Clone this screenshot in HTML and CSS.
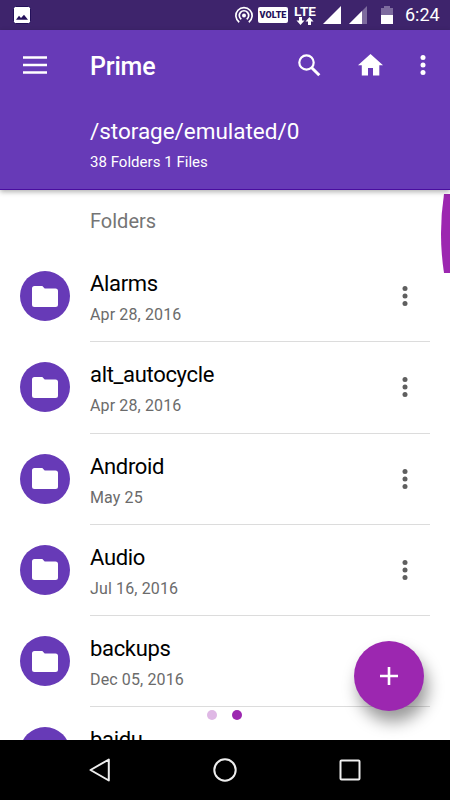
FILE: index.html
```
<!DOCTYPE html>
<html lang="en">
<head>
  <meta charset="utf-8">
  <title>Prime</title>
  <link rel="stylesheet" href="styles.css">
</head>
<body>
<!-- shared icons -->
<svg class="sprite">
  <symbol id="folder" viewBox="0 0 26 21">
    <path d="M2.500 0H10.300l2.400 2.400h10.800A2.500 2.500 0 0 1 26 4.900v13.600a2.500 2.500 0 0 1-2.500 2.500h-21A2.500 2.500 0 0 1 0 18.500v-16A2.500 2.500 0 0 1 2.500 0z"/>
  </symbol>
  <symbol id="dots" viewBox="0 0 6 20">
    <circle cx="3" cy="2.500" r="2.500"/><circle cx="3" cy="10" r="2.500"/><circle cx="3" cy="17.500" r="2.500"/>
  </symbol>
</svg>
<div class="phone">
  <div class="status">
    <svg class="picture" width="18" height="18" viewBox="0 0 18 18"><rect x=".5" y=".5" width="17" height="17" rx="2" fill="#fff" stroke="#24105a"/><path d="M3 13.800l3-4 2 2.300L11 8.800l4 5z" fill="#24105a"/></svg>
    <svg class="hotspot" width="18" height="18" viewBox="0 0 18 18" fill="none" stroke="#fff" stroke-width="1.700"><path d="M4.200 16.200a8.100 8.100 0 1 1 9.600 0"/><path d="M6.300 13.300a4.700 4.700 0 1 1 5.400 0"/><circle cx="9" cy="9.500" r="2" fill="#fff" stroke="none"/></svg>
    <span class="volte">VOLTE</span>
    <div class="lte">
      <span>LTE</span>
      <svg width="18" height="8" viewBox="0 0 18 8" fill="#fff"><path d="M3 0h3v3.500h2.500l-4 4.500-4-4.500H3zM12 8h3V4.500h2.500L13.500 0l-4 4.500H12z"/></svg>
    </div>
    <svg class="signal" width="18" height="18" viewBox="0 0 18 18"><path d="M0 18L18 0v18z" fill="#fff"/></svg>
    <svg class="signal2" width="18" height="18" viewBox="0 0 18 18"><path d="M0 18L18 0v18z" fill="#7d6b9e"/><path d="M0 18L13 5v13z" fill="#fff"/></svg>
    <svg class="battery" width="12" height="18" viewBox="0 0 12 18"><path d="M0 2h3V0h6v2h3v7H0z" fill="#7d6b9e"/><path d="M0 9h12v9H0z" fill="#fff"/></svg>
    <span class="clock">6:24</span>
  </div>

  <header>
    <div class="toolbar">
      <svg class="menu" width="24" height="18" viewBox="0 0 24 18"><path d="M0 1.500h24M0 9h24M0 16.500h24" stroke="#fff" stroke-width="2.500"/></svg>
      <h1>Prime</h1>
      <svg class="search" width="23" height="23" viewBox="0 0 23 23" fill="none" stroke="#fff"><circle cx="8.500" cy="8.500" r="7.200" stroke-width="2.200"/><path d="M13.500 13.500l7.800 7.800" stroke-width="3"/></svg>
      <svg class="home" width="25" height="22" viewBox="0 0 25 22" fill="#fff"><path d="M12.500 0L25 11.300h-3.700V21.500H15v-7.500h-5v7.500H3.800V11.300H0z"/></svg>
      <svg class="more" width="6" height="20"><use href="#dots"/></svg>
    </div>
    <div class="path">/storage/emulated/0</div>
    <div class="count">38 Folders 1 Files</div>
  </header>

  <main>
    <h2>Folders</h2>
    <div class="row">
      <div class="circle"><svg width="26" height="21"><use href="#folder"/></svg></div>
      <div class="info">
        <div><div class="name">Alarms</div><div class="date">Apr 28, 2016</div></div>
        <svg class="options" width="6" height="20"><use href="#dots"/></svg>
      </div>
    </div>
    <div class="row">
      <div class="circle"><svg width="26" height="21"><use href="#folder"/></svg></div>
      <div class="info">
        <div><div class="name">alt_autocycle</div><div class="date">Apr 28, 2016</div></div>
        <svg class="options" width="6" height="20"><use href="#dots"/></svg>
      </div>
    </div>
    <div class="row">
      <div class="circle"><svg width="26" height="21"><use href="#folder"/></svg></div>
      <div class="info">
        <div><div class="name">Android</div><div class="date">May 25</div></div>
        <svg class="options" width="6" height="20"><use href="#dots"/></svg>
      </div>
    </div>
    <div class="row">
      <div class="circle"><svg width="26" height="21"><use href="#folder"/></svg></div>
      <div class="info">
        <div><div class="name">Audio</div><div class="date">Jul 16, 2016</div></div>
        <svg class="options" width="6" height="20"><use href="#dots"/></svg>
      </div>
    </div>
    <div class="row">
      <div class="circle"><svg width="26" height="21"><use href="#folder"/></svg></div>
      <div class="info">
        <div><div class="name">backups</div><div class="date">Dec 05, 2016</div></div>
      </div>
    </div>
    <div class="row">
      <div class="circle"></div>
      <div class="info">
        <div><div class="name">baidu</div></div>
      </div>
    </div>

    <svg class="edge" width="9" height="79" viewBox="0 0 9 79"><path d="M3 0h6v79H3Q-3 39.500 3 0z" fill="#9c27b0"/></svg>
    <div class="pager"><i></i><i class="active"></i></div>
    <button class="fab"><svg width="18" height="18" viewBox="0 0 18 18"><path d="M9 0v18M0 9h18" stroke="#fff" stroke-width="2.600"/></svg></button>
  </main>

  <nav>
    <svg width="24" height="26" viewBox="0 0 24 26"><path d="M20.800 2.500v21L2.500 13z"/></svg>
    <svg width="24" height="26" viewBox="0 0 24 26"><circle cx="12" cy="13" r="10.700"/></svg>
    <svg width="24" height="26" viewBox="0 0 24 26"><rect x="2.500" y="3.500" width="19" height="19" rx="1"/></svg>
  </nav>
</div>
</body>
</html>
```
FILE: styles.css
```
* {
  box-sizing: border-box;
}
body {
  margin: 0;
  font-family: Roboto, sans-serif;
  background-color: #fff;
}
svg {
  display: block;
  flex-shrink: 0;
}
.sprite {
  display: none;
}
.phone {
  width: 450px;
  height: 800px;
  display: flex;
  flex-direction: column;
  overflow: hidden;
}
.status {
  height: 30px;
  flex-shrink: 0;
  background-color: #3e246c;
  color: #fff;
  display: flex;
  align-items: center;
  padding: 0 10px 0 13px;
}
.picture {
  margin-right: auto;
}
.hotspot {
  margin-right: 5px;
}
.volte {
  width: 30px;
  height: 16px;
  border-radius: 2px;
  background-color: #fff;
  color: #24105a;
  font-size: 9px;
  font-weight: 900;
  line-height: 16px;
  text-align: center;
  margin-right: 6px;
}
.lte {
  width: 22px;
  height: 20px;
  display: flex;
  flex-direction: column;
  align-items: center;
  margin-right: 7px;
}
.lte span {
  height: 12px;
  font-size: 13.5px;
  font-weight: 700;
  line-height: 12px;
}
.signal {
  margin-right: 8px;
}
.signal2 {
  margin-right: 14px;
}
.battery {
  margin-right: 12px;
}
.clock {
  width: 35px;
  font-size: 18px;
  line-height: 30px;
  white-space: nowrap;
}
header {
  height: 160px;
  flex-shrink: 0;
  background-color: #673ab7;
  border-bottom: 1px solid #4a0d9f;
  color: #fff;
  box-shadow: 0 2px 5px rgba(0, 0, 0, 0.3);
  z-index: 1;
}
.toolbar {
  height: 70px;
  display: flex;
  align-items: center;
  padding: 0 24.5px 0 23px;
}
.menu {
  margin-right: 43px;
}
h1 {
  margin: 2px auto 0 0;
  font-size: 25px;
  font-weight: 500;
  letter-spacing: -0.2px;
}
.search {
  margin-right: 37px;
}
.home {
  margin-right: 37px;
}
.toolbar .more {
  fill: #fff;
}
.path {
  margin: 17px 0 0 90px;
  font-size: 22.5px;
  line-height: 28px;
  letter-spacing: -0.03px;
}
.count {
  margin: 7px 0 0 90px;
  font-size: 15px;
  line-height: 20px;
  letter-spacing: 0.03px;
}
main {
  position: relative;
  height: 550px;
  overflow: hidden;
}
h2 {
  height: 61px;
  margin: 0;
  padding: 1px 90px 0;
  color: #757575;
  font-size: 20px;
  font-weight: 400;
  line-height: 61px;
}
.row {
  height: 91.25px;
  display: flex;
  padding-right: 20px;
}
.circle {
  width: 50px;
  height: 50px;
  margin: 20px 20px 0;
  border-radius: 50%;
  background-color: #673ab7;
  fill: #fff;
  display: flex;
  flex-shrink: 0;
  align-items: center;
  justify-content: center;
}
.info {
  flex: 1;
  display: flex;
  justify-content: space-between;
  padding: 19px 22px 0 0;
  border-bottom: 1px solid #dcdcdc;
}
.name {
  color: #000;
  font-size: 22px;
  line-height: 28px;
  letter-spacing: -0.33px;
}
.date {
  margin-top: 7px;
  color: #6b6b6b;
  font-size: 16px;
  line-height: 20px;
  letter-spacing: 0.13px;
}
.options {
  margin-top: 16px;
  fill: #5f5f5f;
}
.edge {
  position: absolute;
  top: 4px;
  right: 0;
}
.pager {
  position: absolute;
  top: 520px;
  left: 207.4px;
  display: flex;
  gap: 15px;
}
.pager i {
  width: 10px;
  height: 10px;
  border-radius: 50%;
  background-color: #dfb8e5;
}
.pager .active {
  background-color: #9c27b0;
}
.fab {
  position: absolute;
  right: 26px;
  bottom: 29px;
  width: 70px;
  height: 70px;
  padding: 0;
  border: none;
  border-radius: 50%;
  background-color: #9c27b0;
  box-shadow: 4px 11px 16px rgba(0, 0, 0, 0.4);
  display: flex;
  align-items: center;
  justify-content: center;
}
nav {
  height: 60px;
  flex-shrink: 0;
  background-color: #000;
  display: flex;
  align-items: center;
  justify-content: center;
  gap: 101px;
}
nav svg {
  fill: none;
  stroke: #eee;
  stroke-width: 2;
  stroke-linejoin: round;
}
```
